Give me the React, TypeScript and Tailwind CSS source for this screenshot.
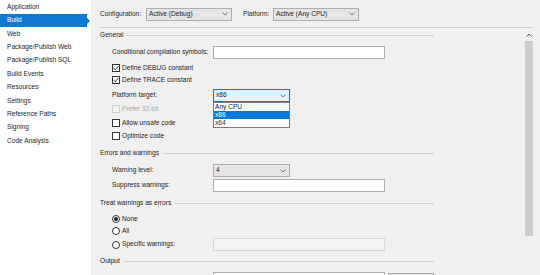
import React from "react";

const sideItems = [
  "Application",
  "Build",
  "Web",
  "Package/Publish Web",
  "Package/Publish SQL",
  "Build Events",
  "Resources",
  "Settings",
  "Reference Paths",
  "Signing",
  "Code Analysis",
];

// small "v" arrow used in the combo boxes
function Chevron() {
  return (
    <svg width="6" height="4" viewBox="0 0 6 4" className="shrink-0">
      <path d="M0.6 0.6 L3 3 L5.4 0.6" fill="none" stroke="#6d6d6d" strokeWidth="0.9" />
    </svg>
  );
}

function Combo({ value, w, focused }: { value: string; w: string; focused?: boolean }) {
  return (
    <div
      className={`${w} h-[13px] shrink-0 flex items-center justify-between pl-[2px] pr-[3px] border ${
        focused ? "border-[#0078d7] bg-[#e5f1fb]" : "border-[#adadad] bg-[#e5e5e5]"
      }`}
    >
      <span>{value}</span>
      <Chevron />
    </div>
  );
}

function TextBox({ disabled }: { disabled?: boolean }) {
  return (
    <div
      className={`w-[172px] h-[13px] shrink-0 border ${
        disabled ? "border-[#d9d9d9] bg-[#f4f4f4]" : "border-[#abadb3] bg-white"
      }`}
    />
  );
}

function Section({ title, className }: { title: string; className?: string }) {
  return (
    <div className={`h-[12px] shrink-0 flex items-center ${className ?? ""}`}>
      <span>{title}</span>
      <div className="flex-1 h-px bg-[#d0d0d0] ml-[4px]" />
    </div>
  );
}

function Check({ label, checked, disabled, className }: { label: string; checked?: boolean; disabled?: boolean; className?: string }) {
  return (
    <div className={`h-[12px] shrink-0 flex items-center pl-[12px] ${className ?? ""}`}>
      <div
        className={`w-[8px] h-[8px] border flex items-center justify-center mr-[2px] ${
          disabled ? "border-[#cfcfcf] bg-[#f4f4f4]" : "border-[#333333] bg-white"
        }`}
      >
        {checked && (
          <svg width="6" height="6" viewBox="0 0 6 6">
            <path d="M0.6 3.1 L2.3 4.8 L5.4 1" fill="none" stroke="#222" strokeWidth="0.9" />
          </svg>
        )}
      </div>
      <span className={disabled ? "text-[#a8a8a8]" : ""}>{label}</span>
    </div>
  );
}

function Radio({ label, checked, className }: { label: string; checked?: boolean; className?: string }) {
  return (
    <div className={`h-[12px] shrink-0 flex items-center pl-[12px] ${className ?? ""}`}>
      <div className="w-[8px] h-[8px] rounded-full border border-[#333333] bg-white flex items-center justify-center mr-[2px]">
        {checked && <div className="w-[4px] h-[4px] rounded-full bg-[#222]" />}
      </div>
      <span>{label}</span>
    </div>
  );
}

export default function App() {
  return (
    <div
      className="w-[540px] h-[275px] overflow-hidden flex text-[6.6px] leading-none text-[#1e1e1e] bg-[#f0f0f0]"
      style={{ fontFamily: '"Liberation Sans", Arial, sans-serif' }}
    >
      {/* left navigation */}
      <div className="w-[91px] shrink-0 bg-white pt-[0.5px]">
        {sideItems.map((item) =>
          item === "Build" ? (
            <div key={item} className="h-[13.4px] flex items-center">
              <div className="w-[87px] h-full bg-[#0f78d2] text-white flex items-center pl-[7px]">{item}</div>
              <div className="w-0 h-0 border-y-[3px] border-y-transparent border-l-[3px] border-l-[#0f78d2]" />
            </div>
          ) : (
            <div key={item} className="h-[13.4px] flex items-center pl-[7px]">
              {item}
            </div>
          )
        )}
      </div>

      {/* main page */}
      <div className="flex-1 min-h-0 flex flex-col">
        <div className="h-[27px] shrink-0 flex items-center pl-[9px] pt-[1px]">
          <span className="w-[46px]">Configuration:</span>
          <Combo value="Active (Debug)" w="w-[86px]" />
          <span className="w-[30px] ml-[11px]">Platform:</span>
          <Combo value="Active (Any CPU)" w="w-[86px]" />
        </div>
        <div className="h-px shrink-0 bg-[#cfcfcf] ml-[9px] mr-[7px]" />

        <div className="flex-1 min-h-0 flex">
          <div className="w-[334px] ml-[9px] pt-[1px] flex flex-col">
            <Section title="General" />

            <div className="h-[13px] shrink-0 mt-[5px] flex items-center pl-[12px]">
              <span className="w-[101px]">Conditional compilation symbols:</span>
              <TextBox />
            </div>
            <Check label="Define DEBUG constant" checked className="mt-[3px]" />
            <Check label="Define TRACE constant" checked />

            <div className="h-[13px] shrink-0 mt-[3px] flex items-center pl-[12px] relative">
              <span className="w-[101px]">Platform target:</span>
              <Combo value="x86" w="w-[77px]" focused />
              {/* open dropdown list */}
              <div className="absolute left-[113px] top-[13px] w-[77px] bg-white border border-[#7a7a7a] z-10 flex flex-col">
                <div className="h-[8px] flex items-center pl-[1px]">Any CPU</div>
                <div className="h-[8px] flex items-center pl-[1px] bg-[#0078d7] text-white">x86</div>
                <div className="h-[8px] flex items-center pl-[1px]">x64</div>
              </div>
            </div>
            <Check label="Prefer 32-bit" disabled className="mt-[1px]" />
            <Check label="Allow unsafe code" className="mt-[2px]" />
            <Check label="Optimize code" className="mt-[1px]" />

            <Section title="Errors and warnings" className="mt-[5px]" />
            <div className="h-[13px] shrink-0 mt-[5px] flex items-center pl-[12px]">
              <span className="w-[101px]">Warning level:</span>
              <Combo value="4" w="w-[77px]" />
            </div>
            <div className="h-[13px] shrink-0 mt-[2px] flex items-center pl-[12px]">
              <span className="w-[101px]">Suppress warnings:</span>
              <TextBox />
            </div>

            <Section title="Treat warnings as errors" className="mt-[5px]" />
            <Radio label="None" checked className="mt-[4px]" />
            <Radio label="All" />
            <div className="h-[13px] shrink-0 mt-[1px] flex items-center pl-[12px]">
              <div className="w-[101px] flex items-center">
                <div className="w-[8px] h-[8px] rounded-full border border-[#333333] bg-white mr-[2px]" />
                <span>Specific warnings:</span>
              </div>
              <TextBox disabled />
            </div>

            <Section title="Output" className="mt-[4px]" />
            <div className="h-[13px] shrink-0 mt-[5px] flex items-start pl-[113px]">
              <TextBox />
              <div className="w-[46px] h-[13px] shrink-0 ml-[3px] mt-[1px] border border-[#adadad] bg-[#e1e1e1]" />
            </div>
          </div>

          <div className="flex-1" />

          {/* vertical scrollbar */}
          <div className="w-[9px] mr-[7px] flex flex-col items-center">
            <div className="h-[13px] shrink-0 flex items-center justify-center">
              <svg width="6" height="4" viewBox="0 0 6 4">
                <path d="M0.5 3.5 L3 1 L5.5 3.5" fill="none" stroke="#505050" strokeWidth="1" />
              </svg>
            </div>
            <div className="w-[8px] h-[195px] shrink-0 bg-[#cdcdcd]" />
          </div>
        </div>
      </div>
    </div>
  );
}
